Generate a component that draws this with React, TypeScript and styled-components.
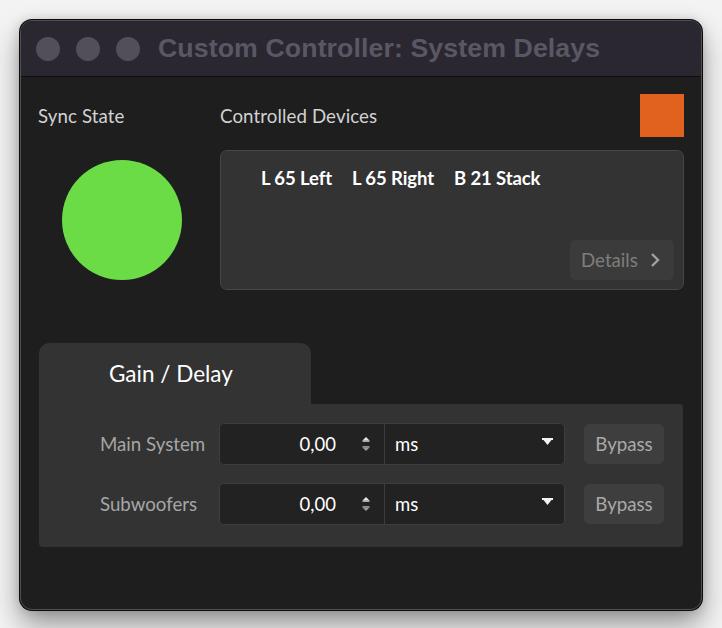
import React from "react";
import styled, { createGlobalStyle } from "styled-components";

const Global = createGlobalStyle`
  html, body { margin: 0; padding: 0; background: #f3f3f3; }
  body { font-family: Lato, "Noto Sans", sans-serif; }
  #root { padding: 20px 0 0 20px; min-height: 100vh; box-sizing: border-box; }
`;

const Window = styled.div`
  width: 682px;
  height: 590px;
  box-sizing: border-box;
  border-radius: 12px;
  border: 1px solid #505050;
  background: #1e1e1e;
  box-shadow: 0 0 0 1px #0c0c0c, 0 14px 28px rgba(0, 0, 0, 0.4), 0 0 12px rgba(0,0,0,0.15);
  overflow: hidden;
  display: flex;
  flex-direction: column;
`;

const TitleBar = styled.div`
  height: 55px;
  flex: none;
  background: #2a2731;
  border-bottom: 1px solid #0e0e10;
  display: flex;
  align-items: center;
  padding-left: 15px;
`;

const Light = styled.span`
  width: 24px;
  height: 24px;
  border-radius: 50%;
  background: #524f5a;
  margin-right: 16px;
  flex: none;
`;

const Title = styled.div`
  margin-left: 2px;
  margin-top: -1px;
  font-family: "Liberation Sans", Arial, sans-serif;
  font-weight: 700;
  font-size: 26.7px;
  color: #5a5764;
  letter-spacing: 0.1px;
`;

const Body = styled.div`
  padding: 17px 17px 0 17px;
  display: flex;
  flex-direction: column;
`;

const TopGrid = styled.div`
  display: grid;
  grid-template-columns: 168px 464px;
  column-gap: 14px;
  grid-template-rows: 43px 140px;
  row-gap: 13px;
`;

const Label = styled.div`
  font-size: 18.7px;
  color: #d2d2d2;
  display: flex;
  align-items: center;
  letter-spacing: 0.1px;
`;

const HeaderRow = styled.div`
  display: flex;
  align-items: center;
  justify-content: space-between;
`;

const StatusSquare = styled.div`
  width: 44px;
  height: 43px;
  background: #e0621e;
`;

const CircleCell = styled.div`
  display: flex;
  align-items: center;
  justify-content: center;
`;

const SyncCircle = styled.div`
  width: 120px;
  height: 120px;
  border-radius: 50%;
  background: #6bdc45;
`;

const DevicesBox = styled.div`
  position: relative;
  box-sizing: border-box;
  background: #333333;
  border: 1.5px solid #474747;
  border-radius: 7px;
  padding: 16px 0 0 40px;
  display: flex;
  align-items: flex-start;
  gap: 20px;
`;

const Device = styled.span`
  font-size: 18.5px;
  font-weight: 700;
  color: #ffffff;
  letter-spacing: -0.1px;
`;

const DetailsButton = styled.div`
  position: absolute;
  right: 9px;
  bottom: 9px;
  width: 104px;
  height: 40px;
  box-sizing: border-box;
  border-radius: 5px;
  background: #3b3b3b;
  display: flex;
  align-items: center;
  padding-left: 11px;
  gap: 12px;
  font-size: 18.7px;
  color: #7e7e7e;
`;

const TabArea = styled.div`
  margin-top: 53px;
  margin-left: 1px;
  display: flex;
  flex-direction: column;
`;

const Tab = styled.div`
  width: 272px;
  height: 61px;
  background: #333333;
  border-radius: 10px 10px 0 0;
  display: flex;
  align-items: center;
  padding-left: 70px;
  font-size: 22.5px;
  color: #ffffff;
  padding-bottom: 1px;
  box-sizing: border-box;
`;

const Panel = styled.div`
  width: 644px;
  height: 143px;
  box-sizing: border-box;
  background: #333333;
  border-radius: 0 4px 4px 4px;
  padding: 19px 19px 0 61px;
  display: grid;
  grid-template-columns: 105px 346px 85px;
  column-gap: 14px;
  row-gap: 18px;
  grid-auto-rows: 42px;
  align-items: center;
`;

const RowLabel = styled.div`
  font-size: 18.7px;
  color: #a6a6a6;
  white-space: nowrap;
`;

const InputGroup = styled.div`
  height: 42px;
  box-sizing: border-box;
  border: 1.5px solid #3d3d3d;
  border-radius: 5px;
  background: #222222;
  display: grid;
  grid-template-columns: 165px 1fr;
`;

const NumberField = styled.div`
  display: flex;
  align-items: center;
  justify-content: flex-end;
  border-right: 1.5px solid #3d3d3d;
  padding-right: 13px;
  gap: 25px;
  font-size: 18.5px;
  color: #ffffff;
`;

const SelectField = styled.div`
  display: flex;
  align-items: center;
  justify-content: space-between;
  padding: 0 11px 0 10px;
  font-size: 18.5px;
  color: #ffffff;
`;

const BypassButton = styled.div`
  margin-left: 5px;
  width: 80px;
  height: 40px;
  border-radius: 5px;
  background: #3e3e3e;
  color: #a9a9a9;
  font-size: 18.7px;
  display: flex;
  align-items: center;
  justify-content: center;
`;

const Spinner = () => (
  <svg width="10" height="18" viewBox="0 0 10 18">
    <path d="M5 2 L8.5 5.5 L1.5 5.5 Z" fill="#e6e6e6" />
    <rect x="1.5" y="5.5" width="7" height="1.2" fill="#e6e6e6" />
    <rect x="1.5" y="11.3" width="7" height="1.2" fill="#bdbdbd" />
    <path d="M1.5 12.5 L8.5 12.5 L5 16 Z" fill="#9a9a9a" />
  </svg>
);

const DropArrow = () => (
  <svg width="11" height="8" viewBox="0 0 11 8" style={{ marginTop: -5 }}>
    <rect x="0" y="0" width="11" height="2" fill="#f2f2f2" />
    <path d="M1.5 2 L9.5 2 L5.5 7 Z" fill="#f2f2f2" />
  </svg>
);

const Chevron = () => (
  <svg width="10" height="16" viewBox="0 0 10 16">
    <path d="M2 2 L8 8 L2 14" stroke="#a0a0a0" strokeWidth="2.4" fill="none" />
  </svg>
);

const rows = ["Main System", "Subwoofers"];

export default function App() {
  return (
    <>
      <Global />
      <Window>
        <TitleBar>
          <Light />
          <Light />
          <Light />
          <Title>Custom Controller: System Delays</Title>
        </TitleBar>
        <Body>
          <TopGrid>
            <Label>Sync State</Label>
            <HeaderRow>
              <Label>Controlled Devices</Label>
              <StatusSquare />
            </HeaderRow>
            <CircleCell>
              <SyncCircle />
            </CircleCell>
            <DevicesBox>
              <Device>L 65 Left</Device>
              <Device>L 65 Right</Device>
              <Device>B 21 Stack</Device>
              <DetailsButton>
                Details
                <Chevron />
              </DetailsButton>
            </DevicesBox>
          </TopGrid>
          <TabArea>
            <Tab>Gain / Delay</Tab>
            <Panel>
              {rows.map((r) => (
                <React.Fragment key={r}>
                  <RowLabel>{r}</RowLabel>
                  <InputGroup>
                    <NumberField>
                      0,00
                      <Spinner />
                    </NumberField>
                    <SelectField>
                      ms
                      <DropArrow />
                    </SelectField>
                  </InputGroup>
                  <BypassButton>Bypass</BypassButton>
                </React.Fragment>
              ))}
            </Panel>
          </TabArea>
        </Body>
      </Window>
    </>
  );
}
